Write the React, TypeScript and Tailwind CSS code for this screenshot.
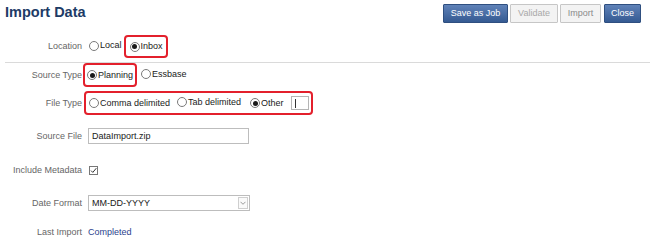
import React from "react";

function Radio({ checked, label }: { checked?: boolean; label: string }) {
  return (
    <span className="inline-flex items-center whitespace-nowrap">
      <span className="w-[10px] h-[10px] rounded-full border border-[#7a7a7a] bg-white flex items-center justify-center mr-[1px] shrink-0">
        {checked && <span className="w-[5px] h-[5px] rounded-full bg-[#1a1a1a]" />}
      </span>
      <span className="text-[#1a1a1a]">{label}</span>
    </span>
  );
}

function Label({ children }: { children: React.ReactNode }) {
  return <div className="w-[82px] text-right text-[#666] shrink-0 whitespace-nowrap">{children}</div>;
}

export default function App() {
  return (
    <div
      className="w-[650px] h-[249px] bg-white overflow-hidden text-[9px] leading-none"
      style={{ fontFamily: "'Liberation Sans', Arial, sans-serif" }}
    >
      <div className="flex items-start h-[30px]">
        <div className="pl-[5px] pt-[5px] text-[14.5px] font-bold text-[#1d3b66] whitespace-nowrap">Import Data</div>
        <div className="ml-auto flex pt-[4px] pr-[9px]">
          <button className="h-[19px] w-[65px] border border-[#2f4f80] bg-gradient-to-b from-[#5f82b8] to-[#355a92] text-white text-[9px] rounded-[1px]">Save as Job</button>
          <button className="h-[19px] w-[48px] ml-[2px] border border-[#c6c6c6] bg-[#f3f3f3] text-[#a8a8a8] text-[9px] rounded-[1px]">Validate</button>
          <button className="h-[19px] w-[41px] ml-[2px] border border-[#c6c6c6] bg-[#f3f3f3] text-[#8a8a8a] text-[9px] rounded-[1px]">Import</button>
          <button className="h-[19px] w-[37px] ml-[3px] border border-[#2f4f80] bg-gradient-to-b from-[#5f82b8] to-[#355a92] text-white text-[9px] rounded-[1px]">Close</button>
        </div>
      </div>

      <div className="flex items-center h-[23px] mt-[5px]">
        <Label>Location</Label>
        <span className="ml-[7px]"><Radio label="Local" /></span>
        <span className="ml-[2px] h-[23px] pl-[4px] pr-[3px] border-2 border-[#e3202c] rounded-[4px] inline-flex items-center">
          <Radio checked label="Inbox" />
        </span>
      </div>

      <div className="mt-[4px] ml-[5px] border-t border-[#dadada]" />

      <div className="flex items-center h-[24px]">
        <Label>Source Type</Label>
        <span className="ml-[1px] h-[24px] pl-[2px] pr-[2px] border-2 border-[#e3202c] rounded-[4px] inline-flex items-center">
          <Radio checked label="Planning" />
        </span>
        <span className="ml-[4px]"><Radio label="Essbase" /></span>
      </div>

      <div className="flex items-center h-[24px] mt-[4px]">
        <Label>File Type</Label>
        <span className="ml-[2px] h-[24px] w-[229px] pl-[3px] border-2 border-[#e3202c] rounded-[4px] inline-flex items-center">
          <Radio label="Comma delimited" />
          <span className="ml-[7px]"><Radio label="Tab delimited" /></span>
          <span className="ml-[9px]"><Radio checked label="Other" /></span>
          <span className="ml-[7px] w-[18px] h-[14px] border border-[#b5b5b5] bg-white flex items-center pl-[3px]">
            <span className="w-px h-[9px] bg-[#333]" />
          </span>
        </span>
      </div>

      <div className="flex items-center h-[16px] mt-[13px]">
        <Label>Source File</Label>
        <div className="ml-[6px] w-[161px] h-[16px] border border-[#bdbdbd] flex items-center pl-[3px] text-[#1a1a1a] whitespace-nowrap">DataImport.zip</div>
      </div>

      <div className="flex items-center h-[18px] mt-[17px]">
        <Label>Include Metadata</Label>
        <span className="ml-[7px] w-[9px] h-[9px] border border-[#777] flex items-center justify-center">
          <svg width="7" height="7" viewBox="0 0 7 7">
            <path d="M1 3.6 L2.8 5.4 L6.3 1.2" fill="none" stroke="#333" strokeWidth="1" />
          </svg>
        </span>
      </div>

      <div className="flex items-center h-[16px] mt-[16px]">
        <Label>Date Format</Label>
        <div className="ml-[6px] w-[162px] h-[16px] border border-[#bdbdbd] flex items-center pl-[3px] pr-[1px] text-[#1a1a1a] whitespace-nowrap">
          <span>MM-DD-YYYY</span>
          <span className="ml-auto w-[10px] h-[12px] border border-[#cfcfcf] bg-[#fafafa] flex items-center justify-center">
            <svg width="6" height="4" viewBox="0 0 6 4">
              <path d="M0.5 0.8 L3 3.3 L5.5 0.8" fill="none" stroke="#999" strokeWidth="1" />
            </svg>
          </span>
        </div>
      </div>

      <div className="flex items-center h-[16px] mt-[13px]">
        <Label>Last Import</Label>
        <span className="ml-[6px] text-[#2b3f8e]">Completed</span>
      </div>
    </div>
  );
}
